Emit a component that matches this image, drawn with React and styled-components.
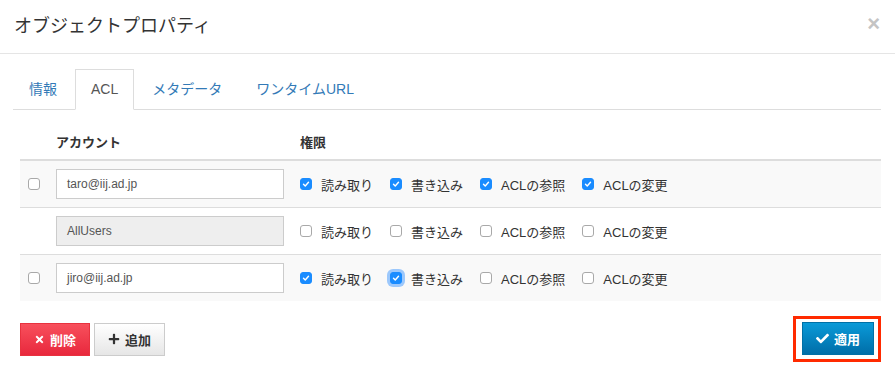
import React, { useState } from "react";
import styled, { createGlobalStyle, css } from "styled-components";
import { FaTimes, FaPlus, FaCheck } from "react-icons/fa";

const GlobalStyle = createGlobalStyle`
  body {
    margin: 0;
    background: #fff;
    font-family: "Liberation Sans", "Noto Sans CJK JP", sans-serif;
    color: #333;
  }
`;

const PERMS = ["読み取り", "書き込み", "ACLの参照", "ACLの変更"];

const initialRows = [
  { account: "taro@iij.ad.jp", selectable: true, perms: [true, true, true, true] },
  { account: "AllUsers", selectable: false, fixed: true, perms: [false, false, false, false] },
  { account: "jiro@iij.ad.jp", selectable: true, perms: [true, true, false, false], focus: 1 },
];

function CheckMark() {
  return (
    <svg width="12" height="12" viewBox="0 0 12 12">
      <path d="M3 6.3 L5.1 8.4 L9 3.9" fill="none" stroke="#fff" strokeWidth="1.7" strokeLinecap="round" strokeLinejoin="round" />
    </svg>
  );
}

function App() {
  const [rows, setRows] = useState(initialRows);

  const toggle = (r, p) => {
    setRows(rows.map((row, i) =>
      i !== r ? row : { ...row, perms: row.perms.map((v, j) => (j === p ? !v : v)) }
    ));
  };

  return (
    <>
      <GlobalStyle />
      <Modal>
        <Header>
          <Title>オブジェクトプロパティ</Title>
          <Close>×</Close>
        </Header>
        <Body>
          <Tabs>
            <Tab>情報</Tab>
            <Tab active>ACL</Tab>
            <Tab>メタデータ</Tab>
            <Tab>ワンタイムURL</Tab>
          </Tabs>
          <Pane>
            <Grid>
              <HeadCell />
              <HeadCell>アカウント</HeadCell>
              <HeadCell>権限</HeadCell>
              {rows.map((row, r) => (
                <React.Fragment key={row.account}>
                  <Cell striped={r % 2 === 0} last={r === rows.length - 1}>
                    {row.selectable && <Box />}
                  </Cell>
                  <Cell striped={r % 2 === 0} last={r === rows.length - 1}>
                    <Input disabled={row.fixed}>{row.account}</Input>
                  </Cell>
                  <Cell striped={r % 2 === 0} last={r === rows.length - 1}>
                    <Perms>
                      {PERMS.map((label, p) => (
                        <Perm key={label} onClick={() => toggle(r, p)}>
                          <Box checked={row.perms[p]} focus={row.focus === p}>
                            {row.perms[p] && <CheckMark />}
                          </Box>
                          {label}
                        </Perm>
                      ))}
                    </Perms>
                  </Cell>
                </React.Fragment>
              ))}
            </Grid>
            <Footer>
              <Button variant="danger"><FaTimes size={11} />削除</Button>
              <Button><FaPlus size={12} />追加</Button>
              <Highlight>
                <Button variant="primary"><FaCheck size={13} />適用</Button>
              </Highlight>
            </Footer>
          </Pane>
        </Body>
      </Modal>
    </>
  );
}

export default App;

const Modal = styled.div`
  width: 895px;
  background: #fff;
`;

const Header = styled.div`
  display: flex;
  align-items: center;
  justify-content: space-between;
  padding: 14px 15px 15px 14px;
  border-bottom: 1px solid #e5e5e5;
`;

const Title = styled.h4`
  margin: 0;
  font-size: 18px;
  font-weight: normal;
  line-height: 24px;
  color: #333;
`;

const Close = styled.span`
  font-size: 22px;
  font-weight: bold;
  line-height: 20px;
  color: #c4c4c4;
  margin-top: -4px;
`;

const Body = styled.div`
  padding: 15px 14px 15px 13px;
`;

const Tabs = styled.div`
  display: flex;
  border-bottom: 1px solid #ddd;
`;

const Tab = styled.a`
  display: block;
  margin-bottom: -1px;
  margin-right: 2px;
  padding: 10px 15px;
  line-height: 19px;
  font-size: 14px;
  border: 1px solid transparent;
  color: #337ab7;
  cursor: pointer;

  ${(p) => p.active && css`
    color: #555;
    background: #fff;
    border-color: #ddd #ddd transparent;
  `}
`;

const Pane = styled.div`
  padding-left: 7px;
  margin-top: 13px;
`;

const Grid = styled.div`
  display: grid;
  grid-template-columns: 28px 244px 1fr;
`;

const HeadCell = styled.div`
  padding: 10px 8px 6px;
  line-height: 20px;
  font-size: 13px;
  font-weight: bold;
  color: #333;
  border-bottom: 2px solid #ddd;
`;

const Cell = styled.div`
  display: flex;
  align-items: center;
  padding: 8px;
  background: ${(p) => (p.striped ? "#f9f9f9" : "#fff")};
  border-bottom: ${(p) => (p.last ? "none" : "1px solid #ddd")};
`;

const Input = styled.div`
  box-sizing: border-box;
  width: 228px;
  height: 30px;
  padding: 0 10px;
  display: flex;
  align-items: center;
  font-size: 12px;
  color: #555;
  border: 1px solid #ccc;
  background: ${(p) => (p.disabled ? "#eee" : "#fff")};
`;

const Perms = styled.div`
  display: flex;
  align-items: center;
  gap: 17px;
`;

const Perm = styled.label`
  display: flex;
  align-items: center;
  gap: 9px;
  font-size: 13px;
  color: #333;
  cursor: pointer;
`;

const Box = styled.span`
  box-sizing: border-box;
  width: 12px;
  height: 12px;
  border-radius: 3px;
  display: inline-flex;
  align-items: center;
  justify-content: center;
  background: #fff;
  border: 1px solid #a9a9a9;

  ${(p) => p.checked && css`
    background: #1a8cff;
    border-color: #1a8cff;
  `}

  ${(p) => p.focus && css`
    box-shadow: 0 0 0 3px rgba(80, 160, 255, 0.55);
  `}
`;

const Footer = styled.div`
  display: flex;
  align-items: center;
  gap: 4px;
  margin-top: 15px;
`;

const variants = {
  danger: css`
    color: #fff;
    background: linear-gradient(#f8505c, #e8283d);
    border-color: #e8323f;
  `,
  primary: css`
    color: #fff;
    background: linear-gradient(#0a9ad8, #006ea8);
    border-color: #0070a6;
  `,
};

const Button = styled.button`
  box-sizing: border-box;
  height: 33px;
  padding: 0 13px;
  display: inline-flex;
  align-items: center;
  gap: 5px;
  font-family: inherit;
  font-size: 13px;
  font-weight: bold;
  color: #333;
  border: 1px solid #ccc;
  border-radius: 0;
  background: linear-gradient(#fff, #e6e6e6);
  ${(p) => variants[p.variant]}
`;

const Highlight = styled.div`
  margin-left: auto;
  padding: 3px 4px 4px 6px;
  border: 3px solid #ff2a00;
`;
